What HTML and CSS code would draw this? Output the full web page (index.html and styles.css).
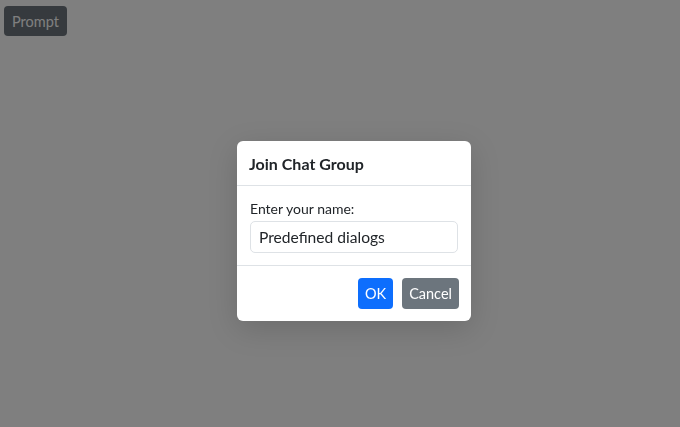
FILE: index.html
```html
<!DOCTYPE html>
<html>
<head>
<meta charset="utf-8">
<link rel="stylesheet" href="styles.css">
</head>
<body>
<button class="btn btn-secondary prompt">Prompt</button>
<div class="backdrop"></div>
<div class="modal">
  <div class="modal-header"><h5 class="modal-title">Join Chat Group</h5></div>
  <div class="modal-body">
    <label class="label">Enter your name:</label>
    <input class="input" type="text" value="Predefined dialogs">
  </div>
  <div class="modal-footer">
    <button class="btn btn-primary">OK</button>
    <button class="btn btn-secondary">Cancel</button>
  </div>
</div>
</body>
</html>
```
FILE: styles.css
```css
* { box-sizing: border-box; }
html, body { margin: 0; height: 100%; }
body {
  background: #fff;
  font-family: "Lato", "Noto Sans", sans-serif;
  font-size: 15px;
  color: #212529;
  padding: 6px 4px;
}
.btn {
  font-family: inherit;
  font-size: 14.5px;
  border: 1px solid transparent;
  border-radius: 4px;
  padding: 0 6px;
  height: 31px;
  line-height: 29px;
  color: #fff;
}
.btn-primary { background: #0d6efd; }
.btn-secondary { background: #6c757d; }
.prompt { height: 30px; padding: 0 7px; font-size: 14.5px; }
.backdrop {
  position: fixed; inset: 0;
  background: rgba(0,0,0,0.5);
}
.modal {
  position: absolute;
  left: 237px; top: 141px;
  width: 234px;
  background: #fff;
  border-radius: 6px;
  box-shadow: 0 8px 30px rgba(0,0,0,0.15);
  display: flex; flex-direction: column;
}
.modal-header {
  height: 45px;
  padding: 0 12px;
  display: flex; align-items: center;
  border-bottom: 1px solid #dee2e6;
}
.modal-title { margin: 0; font-size: 16px; font-weight: 700; }
.modal-body { padding: 14px 13px 12px; display: flex; flex-direction: column; }
.label { font-size: 14px; line-height: 18px; color: #212529; margin-bottom: 3px; }
.input {
  font-family: inherit;
  font-size: 15.6px;
  height: 32px;
  border: 1px solid #dee2e6;
  border-radius: 5px;
  padding: 0 8px;
  color: #212529;
}
.modal-footer {
  border-top: 1px solid #dee2e6;
  display: flex; justify-content: flex-end; gap: 9px;
  padding: 12px 12px 12px;
}
```
